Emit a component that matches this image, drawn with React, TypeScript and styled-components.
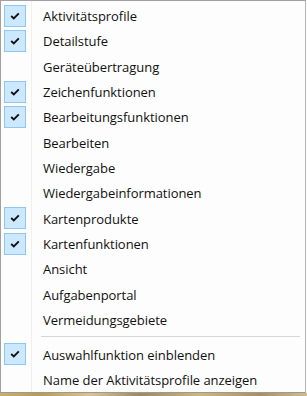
import React from "react";
import styled, { createGlobalStyle } from "styled-components";

const Global = createGlobalStyle`
  html, body { margin: 0; padding: 0; background: #ffffff; }
  body { width: 307px; height: 396px; overflow: hidden; }
`;

const Page = styled.div`
  display: flex;
  flex-direction: column;
  width: 307px;
  height: 396px;
`;

const Menu = styled.div`
  box-sizing: border-box;
  width: 306px;
  height: 393px;
  border: 1px solid #a0a0a0;
  border-right-color: #b4b4b4;
  border-bottom-color: #9a9a9a;
  padding-top: 2px;
  display: flex;
  flex-direction: column;
  background:
    linear-gradient(to right, transparent 30px, #efefef 30px, #efefef 31px, transparent 31px),
    #fdfdfd;
  font-family: "Open Sans", "Noto Sans", sans-serif;
  font-size: 13px;
  color: #111111;
  -webkit-font-smoothing: antialiased;
`;

const Item = styled.div<{ $h?: number }>`
  display: grid;
  grid-template-columns: 42px 1fr;
  align-items: center;
  height: ${(p) => p.$h ?? 25.33}px;
  flex: none;
`;

const Gutter = styled.div`
  display: flex;
  align-items: center;
  padding-left: 3px;
`;

const CheckBox = styled.div`
  box-sizing: border-box;
  width: 22px;
  height: 22px;
  border: 1px solid #8fc6f2;
  background: #cce8ff;
  display: flex;
  align-items: center;
  justify-content: center;
`;

const Label = styled.span`
  white-space: nowrap;
  line-height: 16px;
  margin-top: 1px;
  letter-spacing: -0.05px;
`;

const Separator = styled.div`
  height: 9.2px;
  flex: none;
  display: flex;
  align-items: center;
  padding-left: 40px;
  padding-right: 5px;
  &::after {
    content: "";
    flex: 1;
    height: 1px;
    background: #d7d7d7;
  }
`;

const Backdrop = styled.div`
  height: 3px;
  width: 307px;
  background: linear-gradient(
    to right,
    #c9b070 0px,
    #b89a55 40px,
    #d8c590 90px,
    #9c8a60 140px,
    #cdb77c 200px,
    #a89060 260px,
    #d0bf8a 307px
  );
`;

const Check = () => (
  <svg width="10" height="8" viewBox="0 0 10 8">
    <polyline
      points="1.2,4 3.8,6.4 8.8,1.4"
      fill="none"
      stroke="#111111"
      strokeWidth="1.9"
    />
  </svg>
);

type Entry = { label: string; checked?: boolean };

const group1: Entry[] = [
  { label: "Aktivitätsprofile", checked: true },
  { label: "Detailstufe", checked: true },
  { label: "Geräteübertragung" },
  { label: "Zeichenfunktionen", checked: true },
  { label: "Bearbeitungsfunktionen", checked: true },
  { label: "Bearbeiten" },
  { label: "Wiedergabe" },
  { label: "Wiedergabeinformationen" },
  { label: "Kartenprodukte", checked: true },
  { label: "Kartenfunktionen", checked: true },
  { label: "Ansicht" },
  { label: "Aufgabenportal" },
  { label: "Vermeidungsgebiete" },
];

const group2: Entry[] = [
  { label: "Auswahlfunktion einblenden", checked: true },
  { label: "Name der Aktivitätsprofile anzeigen" },
];

const Row = ({ e, h }: { e: Entry; h?: number }) => (
  <Item $h={h}>
    <Gutter>
      {e.checked ? (
        <CheckBox>
          <Check />
        </CheckBox>
      ) : null}
    </Gutter>
    <Label>{e.label}</Label>
  </Item>
);

export default function App() {
  return (
    <>
      <Global />
      <Page>
        <Menu>
          {group1.map((e) => (
            <Row key={e.label} e={e} />
          ))}
          <Separator />
          {group2.map((e) => (
            <Row key={e.label} e={e} h={25.6} />
          ))}
        </Menu>
        <Backdrop />
      </Page>
    </>
  );
}
